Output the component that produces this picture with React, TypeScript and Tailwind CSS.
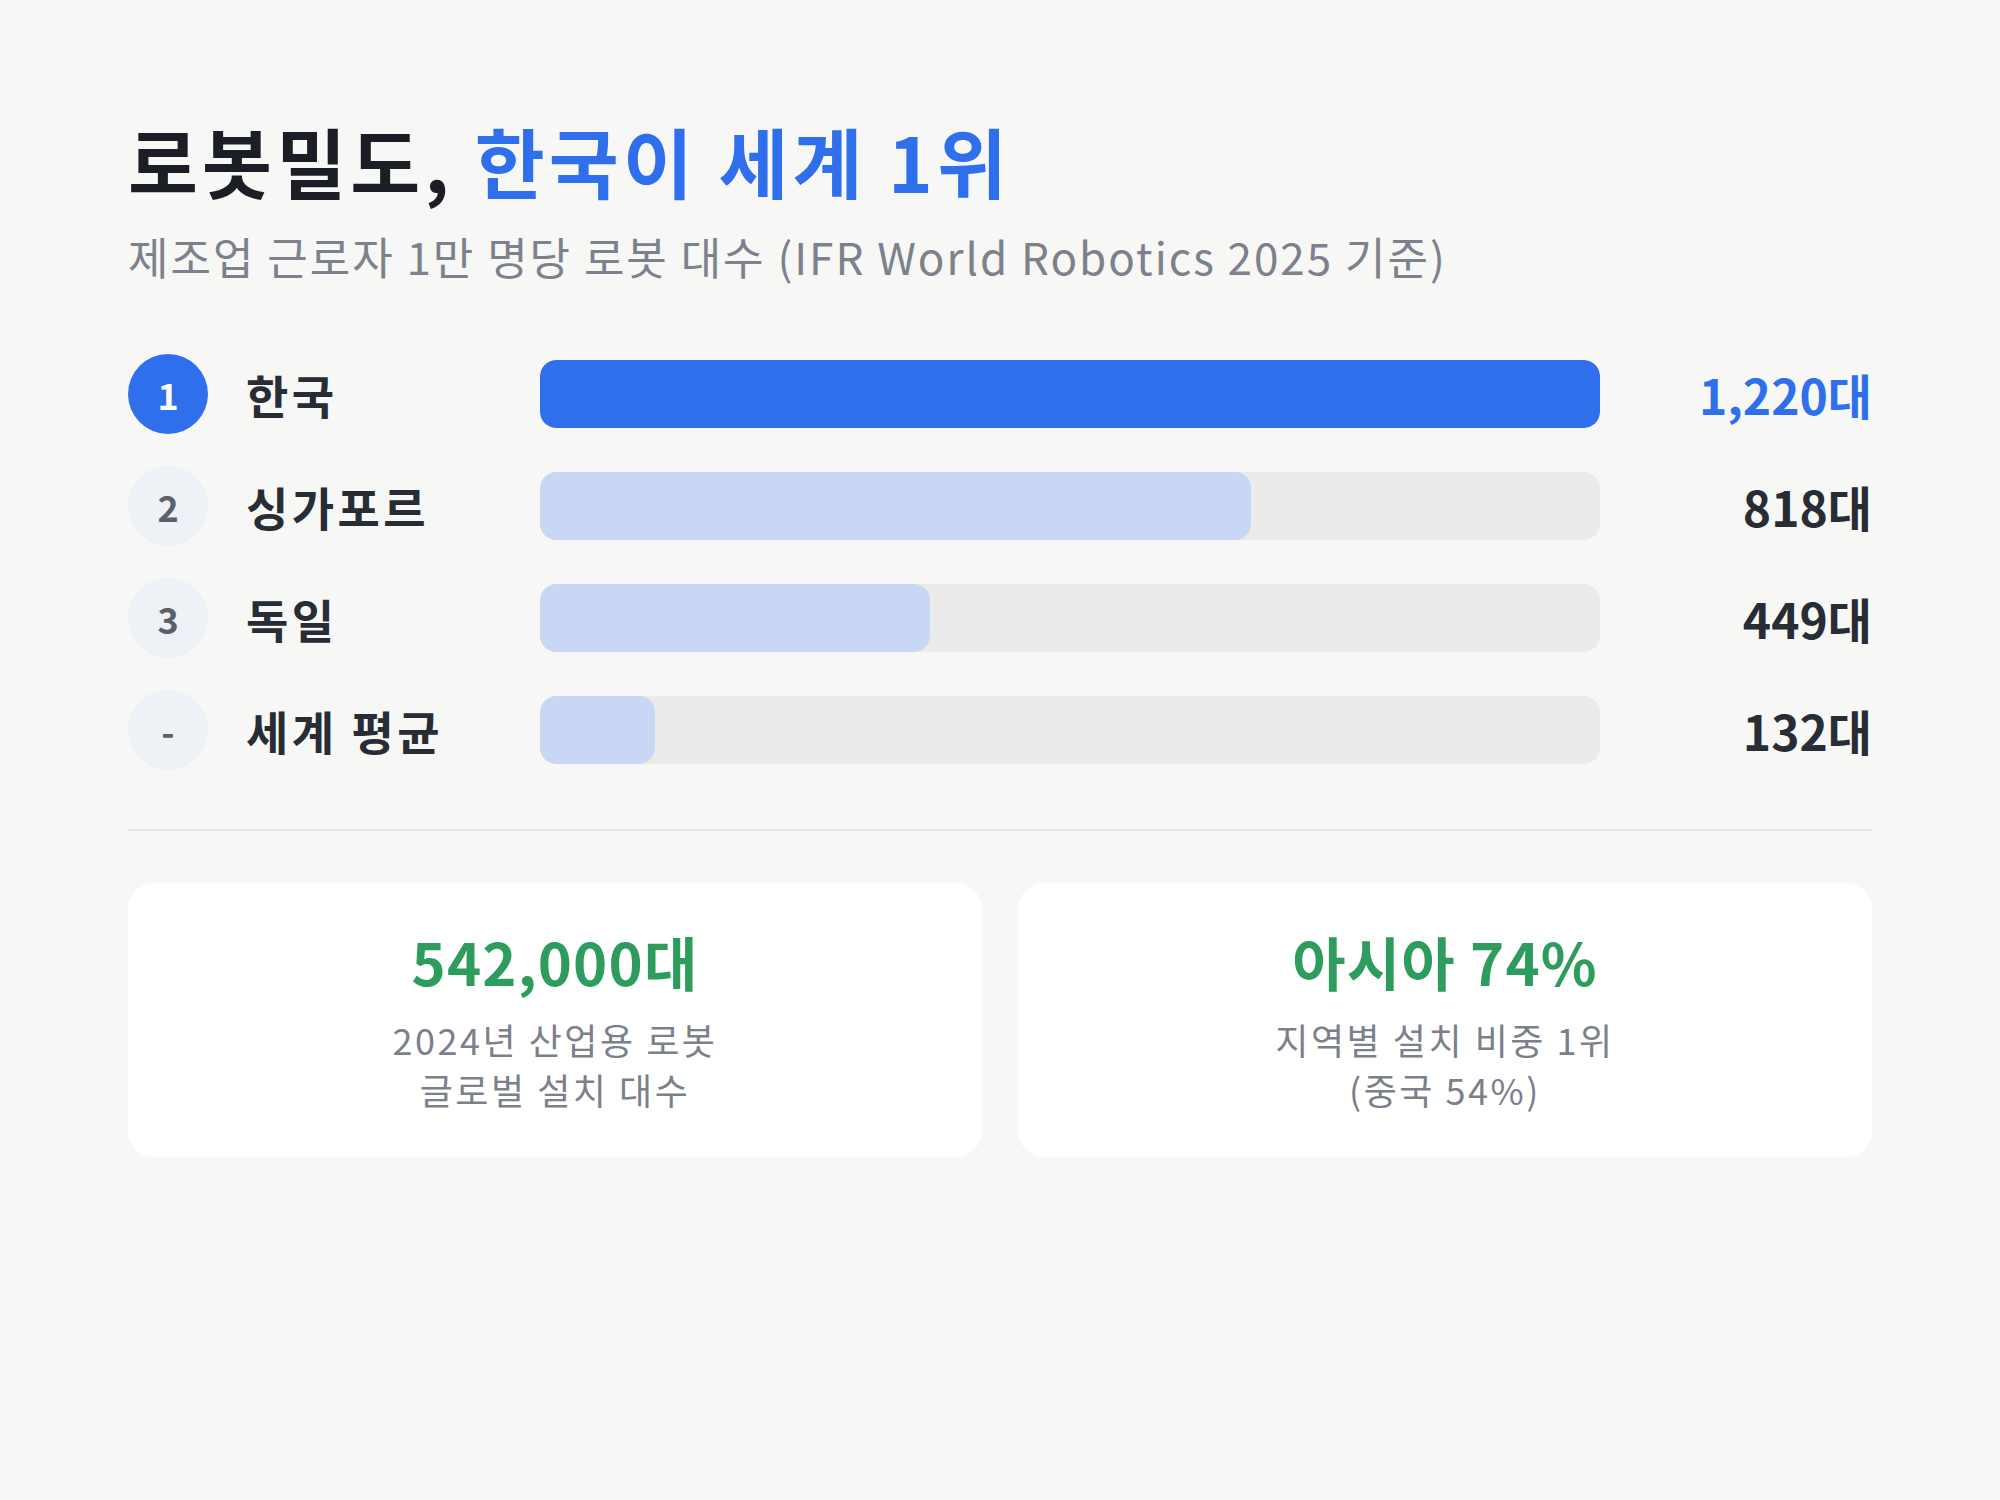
import React from 'react';

type Row = {
  rank: string;
  name: string;
  value: number;
  top?: boolean;
};

const ROWS: Row[] = [
  { rank: '1', name: '한국', value: 1220, top: true },
  { rank: '2', name: '싱가포르', value: 818 },
  { rank: '3', name: '독일', value: 449 },
  { rank: '-', name: '세계 평균', value: 132 },
];

const MAX = 1220;

const FONT = { fontFamily: '"Noto Sans CJK KR", "Noto Sans", sans-serif' };

function RankRow({ row }: { row: Row }) {
  const pct = (row.value / MAX) * 100;
  return (
    <div className="flex items-center">
      <div
        className={
          row.top
            ? 'flex h-20 w-20 shrink-0 items-center justify-center rounded-full bg-[#2f6fec] text-[36px] font-bold text-white'
            : 'flex h-20 w-20 shrink-0 items-center justify-center rounded-full bg-[#eef1f6] text-[36px] font-bold text-[#5b606c]'
        }
      >
        {row.rank}
      </div>
      <div className="ml-[38px] w-[294px] shrink-0 text-[46px] font-bold leading-none tracking-[0.075em] text-[#282c34]">
        {row.name}
      </div>
      <div className="h-[68px] flex-1 overflow-hidden rounded-[16px] bg-[#ebebe9]">
        {/* bar width comes from data */}
        <div
          className={row.top ? 'h-full rounded-[16px] bg-[#2f6fec]' : 'h-full rounded-[16px] bg-[#c8d7f4]'}
          style={{ width: `${pct}%` }}
        />
      </div>
      <div
        className={
          row.top
            ? 'w-[272px] shrink-0 text-right text-[48px] font-bold leading-none text-[#2f6fec]'
            : 'w-[272px] shrink-0 text-right text-[48px] font-bold leading-none text-[#282c34]'
        }
      >
        {row.value.toLocaleString('en-US')}대
      </div>
    </div>
  );
}

function StatCard({ value, lines }: { value: string; lines: string[] }) {
  return (
    <div className="flex h-[274px] flex-col items-center justify-center rounded-[26px] bg-white text-center">
      <div className="text-[58px] font-bold leading-[1.2] tracking-[0.02em] text-[#2e9c5c]">{value}</div>
      <div className="mt-[18px] text-[36px] leading-[50px] tracking-[0.07em] text-[#7b808b]">
        {lines.map((l) => (
          <div key={l}>{l}</div>
        ))}
      </div>
    </div>
  );
}

export default function App() {
  return (
    <div className="min-h-screen w-full bg-[#f7f7f5] px-32 pt-[115px]" style={FONT}>
      <h1 className="text-[76px] font-bold leading-[1.2] tracking-[0.055em] text-[#1b1e25]">
        로봇밀도, <span className="text-[#2f6fec]">한국이 세계 1위</span>
      </h1>
      <p className="mt-[22px] text-[44px] leading-[1.3] tracking-[0.045em] text-[#7c818c]">
        제조업 근로자 1만 명당 로봇 대수 (IFR World Robotics 2025 기준)
      </p>

      <div className="mt-[69px] flex flex-col gap-8">
        {ROWS.map((r) => (
          <RankRow key={r.name} row={r} />
        ))}
      </div>

      <div className="mt-[59px] h-[2px] w-full bg-[#e4e4e2]" />

      <div className="mt-[52px] grid grid-cols-2 gap-9">
        <StatCard value="542,000대" lines={['2024년 산업용 로봇', '글로벌 설치 대수']} />
        <StatCard value="아시아 74%" lines={['지역별 설치 비중 1위', '(중국 54%)']} />
      </div>
    </div>
  );
}
